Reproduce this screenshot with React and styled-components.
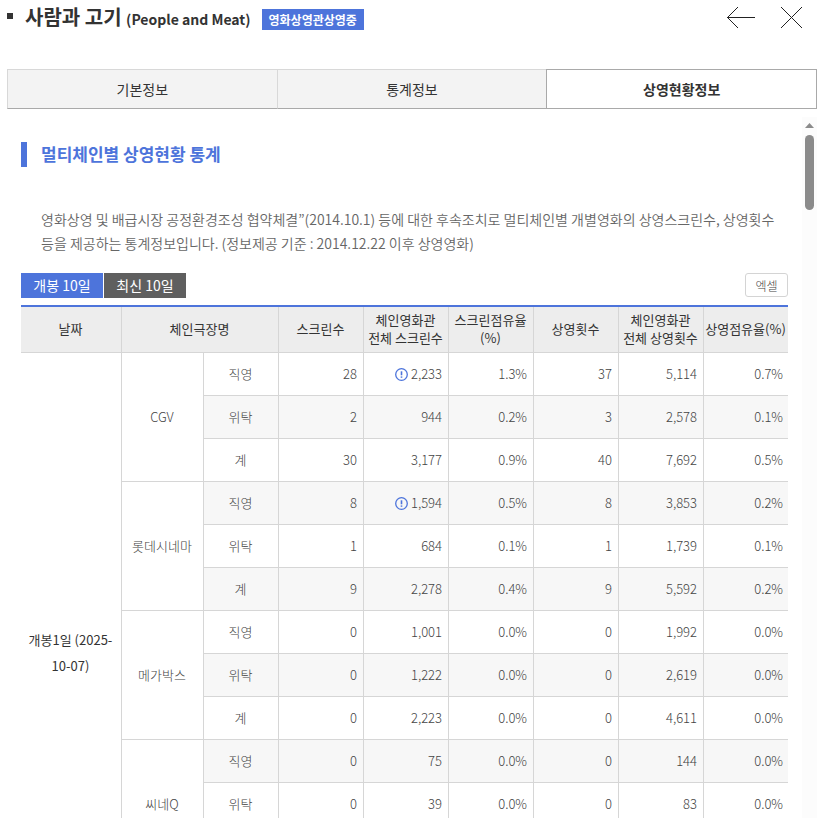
import React, { useState } from 'react';
import styled, { createGlobalStyle } from 'styled-components';

const GlobalStyle = createGlobalStyle`
  * {
    box-sizing: border-box;
  }
  body {
    margin: 0;
    background: #fff;
    color: #333;
    font-family: 'Noto Sans CJK KR', 'Noto Sans', sans-serif;
    font-size: 14px;
  }
  button {
    font-family: inherit;
    cursor: pointer;
  }
`;

const Layer = styled.div`
  display: flex;
  flex-direction: column;
  height: 100vh;
  padding: 0 8px 0 7px;
  overflow: hidden;
`;

const Header = styled.header`
  display: flex;
  justify-content: space-between;
  align-items: flex-start;
  height: 69px;
  flex-shrink: 0;
`;

const TitleGroup = styled.div`
  display: flex;
  align-items: center;
  height: 36px;
`;

const Bullet = styled.span`
  width: 6px;
  height: 6px;
  margin: 0 12px 4px 0;
  background: #333;
`;

const Title = styled.h1`
  margin: 0 11px 0 0;
  font-size: 20px;
  font-weight: 700;
  line-height: 36px;
`;

const EnglishTitle = styled.span`
  font-size: 14px;
`;

const Status = styled.span`
  height: 21px;
  margin-top: 2px;
  padding: 0 7px;
  background: #4d74db;
  color: #fff;
  font-size: 12px;
  font-weight: 700;
  line-height: 21px;
`;

const HeaderButtons = styled.div`
  display: flex;
  gap: 24px;
  padding: 6px 14px 0 0;
`;

const IconButton = styled.button`
  display: flex;
  padding: 0;
  border: 0;
  background: none;
  color: #222;
`;

const TabList = styled.div`
  display: flex;
  height: 40px;
  flex-shrink: 0;
`;

const Tab = styled.button`
  flex: 1;
  padding: 0 0 1px;
  border: 1px solid ${({ $active }) => ($active ? '#a9a9a9' : '#d8d8d8')};
  border-bottom-color: #a9a9a9;
  border-right-width: ${({ $active }) => ($active ? '1px' : '0')};
  background: ${({ $active }) => ($active ? '#fff' : '#f3f3f3')};
  color: #333;
  font-size: 14px;
  font-weight: ${({ $active }) => ($active ? 700 : 400)};
`;

const Pane = styled.div`
  display: flex;
  flex: 1;
  min-height: 0;
  margin-top: 8px;
`;

const Content = styled.main`
  flex: 1;
  min-width: 0;
  padding: 25px 14px 0;
  overflow: hidden;
`;

const SectionTitle = styled.h2`
  margin: 0 0 40px;
  padding: 0 0 2px 14px;
  border-left: 6px solid #4d74db;
  color: #4d74db;
  font-size: 17px;
  font-weight: 700;
  line-height: 23px;
`;

const Description = styled.p`
  margin: 0;
  padding: 0 0 18px 20px;
  color: #666;
  font-weight: 350;
  line-height: 24px;
  word-break: keep-all;
`;

const Toolbar = styled.div`
  display: flex;
  justify-content: space-between;
  align-items: flex-start;
  height: 32px;
`;

const RangeGroup = styled.div`
  display: flex;
  gap: 1px;
`;

const RangeButton = styled.button`
  min-width: 82px;
  height: 25px;
  padding: 0 12px;
  border: 0;
  background: ${({ $active }) => ($active ? '#4d74db' : '#5f5f5f')};
  color: #fff;
  font-size: 14px;
  line-height: 25px;
`;

const ExcelButton = styled.button`
  width: 43px;
  height: 24px;
  padding: 0;
  border: 1px solid #d4d4d4;
  border-radius: 3px;
  background: #fff;
  color: #444;
  font-size: 12px;
  font-weight: 300;
`;

const Table = styled.table`
  width: 100%;
  table-layout: fixed;
  border-collapse: separate;
  border-spacing: 0;
  border-top: 2px solid #4d74db;
`;

const Col = styled.col`
  width: ${({ $width }) => $width}px;
`;

const HeadCell = styled.th`
  height: 46px;
  padding: 0 1px 2px 0;
  border-right: 1px solid #d6d6d6;
  border-bottom: 1px solid #d6d6d6;
  background: #ededed;
  font-size: 13px;
  font-weight: 400;
  line-height: 18px;
  white-space: pre-line;
  &:last-child {
    border-right: 0;
    white-space: nowrap;
  }
`;

const Row = styled.tr`
  background: ${({ $striped }) => ($striped ? '#f7f7f7' : '#fff')};
`;

const Cell = styled.td`
  height: 43px;
  padding: 0 6px 0 5px;
  border-right: 1px solid #d6d6d6;
  border-bottom: 1px solid #d6d6d6;
  color: #444;
  font-size: 13px;
  font-weight: 300;
  line-height: 26px;
  text-align: right;
  &:last-child {
    padding-right: 5px;
    border-right: 0;
  }
`;

const NameCell = styled(Cell)`
  background: ${({ $plain }) => ($plain ? '#fff' : 'inherit')};
  text-align: center;
`;

const DateCell = styled(NameCell)`
  padding-bottom: 2px;
  color: #333;
  font-weight: 400;
`;

const Notice = styled.svg`
  margin-right: 3px;
  vertical-align: -2px;
`;

const ScrollTrack = styled.div`
  display: flex;
  flex-direction: column;
  align-items: center;
  gap: 7px;
  width: 15px;
  padding-top: 6px;
  background: #fcfcfc;
`;

const ScrollThumb = styled.div`
  width: 9px;
  height: 75px;
  border-radius: 5px;
  background: #8b8b8b;
`;

const tabs = ['기본정보', '통계정보', '상영현황정보'];
const ranges = ['개봉 10일', '최신 10일'];
const columnWidths = [101, 82, 75, 85, 85, 85, 85, 85, 84];

const chains = [
  {
    name: 'CGV',
    rows: [
      { type: '직영', values: ['28', '2,233', '1.3%', '37', '5,114', '0.7%'], notice: true },
      { type: '위탁', values: ['2', '944', '0.2%', '3', '2,578', '0.1%'] },
      { type: '계', values: ['30', '3,177', '0.9%', '40', '7,692', '0.5%'] },
    ],
  },
  {
    name: '롯데시네마',
    rows: [
      { type: '직영', values: ['8', '1,594', '0.5%', '8', '3,853', '0.2%'], notice: true },
      { type: '위탁', values: ['1', '684', '0.1%', '1', '1,739', '0.1%'] },
      { type: '계', values: ['9', '2,278', '0.4%', '9', '5,592', '0.2%'] },
    ],
  },
  {
    name: '메가박스',
    rows: [
      { type: '직영', values: ['0', '1,001', '0.0%', '0', '1,992', '0.0%'] },
      { type: '위탁', values: ['0', '1,222', '0.0%', '0', '2,619', '0.0%'] },
      { type: '계', values: ['0', '2,223', '0.0%', '0', '4,611', '0.0%'] },
    ],
  },
  {
    name: '씨네Q',
    rows: [
      { type: '직영', values: ['0', '75', '0.0%', '0', '144', '0.0%'] },
      { type: '위탁', values: ['0', '39', '0.0%', '0', '83', '0.0%'] },
      { type: '계', values: ['0', '114', '0.0%', '0', '227', '0.0%'] },
    ],
  },
  { name: '기타', rows: [{ values: ['-', '-', '-', '-', '-', '-'] }] },
  { name: '합계', rows: [{ values: ['39', '7,792', '0.5%', '49', '18,122', '0.3%'] }] },
];

// one flat list, so that the stripes run on across the chains
const tableRows = chains.flatMap((chain) =>
  chain.rows.map((row, i) => ({
    ...row,
    chain: i === 0 ? chain.name : null,
    span: chain.rows.length,
  }))
);

function NoticeIcon() {
  return (
    <Notice width="13" height="13" viewBox="0 0 13 13" fill="none" stroke="#4d74db" role="img" aria-label="안내">
      <circle cx="6.5" cy="6.5" r="5.8" strokeWidth="1.3" />
      <path d="M6.5 3.3v4" strokeWidth="1.6" />
      <path d="M6.5 8.4v1.4" strokeWidth="1.6" />
    </Notice>
  );
}

function StatsTable() {
  return (
    <Table>
      <colgroup>
        {columnWidths.map((width, i) => (
          <Col key={i} $width={width} />
        ))}
      </colgroup>
      <thead>
        <tr>
          <HeadCell scope="col">날짜</HeadCell>
          <HeadCell scope="col" colSpan={2}>체인극장명</HeadCell>
          <HeadCell scope="col">스크린수</HeadCell>
          <HeadCell scope="col">{'체인영화관\n전체 스크린수'}</HeadCell>
          <HeadCell scope="col">{'스크린점유율\n(%)'}</HeadCell>
          <HeadCell scope="col">상영횟수</HeadCell>
          <HeadCell scope="col">{'체인영화관\n전체 상영횟수'}</HeadCell>
          <HeadCell scope="col">상영점유율(%)</HeadCell>
        </tr>
      </thead>
      <tbody>
        {tableRows.map((row, i) => (
          <Row key={i} $striped={i % 2 === 1}>
            {i === 0 && (
              <DateCell $plain rowSpan={tableRows.length}>개봉1일 (2025-10-07)</DateCell>
            )}
            {row.chain && (
              <NameCell $plain rowSpan={row.span} colSpan={row.type ? 1 : 2}>{row.chain}</NameCell>
            )}
            {row.type && <NameCell>{row.type}</NameCell>}
            {row.values.map((value, j) => (
              <Cell key={j}>
                {row.notice && j === 1 && <NoticeIcon />}
                {value}
              </Cell>
            ))}
          </Row>
        ))}
      </tbody>
    </Table>
  );
}

export default function App() {
  const [tab, setTab] = useState(2);
  const [range, setRange] = useState(0);

  return (
    <Layer>
      <GlobalStyle />
      <Header>
        <TitleGroup>
          <Bullet />
          <Title>
            사람과 고기 <EnglishTitle>(People and Meat)</EnglishTitle>
          </Title>
          <Status>영화상영관상영중</Status>
        </TitleGroup>
        <HeaderButtons>
          <IconButton type="button" aria-label="이전">
            <svg width="30" height="23" viewBox="0 0 30 23" fill="none" stroke="currentColor">
              <path d="M1 11.5H29M12 1L1.5 11.5L12 22" />
            </svg>
          </IconButton>
          <IconButton type="button" aria-label="닫기">
            <svg width="23" height="23" viewBox="0 0 23 23" fill="none" stroke="currentColor">
              <path d="M1 1L22 22M22 1L1 22" />
            </svg>
          </IconButton>
        </HeaderButtons>
      </Header>
      <TabList role="tablist">
        {tabs.map((name, i) => (
          <Tab key={name} type="button" role="tab" aria-selected={i === tab} $active={i === tab} onClick={() => setTab(i)}>
            {name}
          </Tab>
        ))}
      </TabList>
      <Pane>
        <Content>
          <SectionTitle>멀티체인별 상영현황 통계</SectionTitle>
          <Description>
            영화상영 및 배급시장 공정환경조성 협약체결”(2014.10.1) 등에 대한 후속조치로 멀티체인별 개별영화의 상영스크린수, 상영횟수 등을 제공하는 통계정보입니다. (정보제공 기준 : 2014.12.22 이후 상영영화)
          </Description>
          <Toolbar>
            <RangeGroup>
              {ranges.map((name, i) => (
                <RangeButton key={name} type="button" $active={i === range} onClick={() => setRange(i)}>
                  {name}
                </RangeButton>
              ))}
            </RangeGroup>
            <ExcelButton type="button">엑셀</ExcelButton>
          </Toolbar>
          <StatsTable />
        </Content>
        <ScrollTrack aria-hidden="true">
          <svg width="9" height="5" viewBox="0 0 9 5" fill="#8b8b8b">
            <path d="M4.5 0L9 5H0z" />
          </svg>
          <ScrollThumb />
        </ScrollTrack>
      </Pane>
    </Layer>
  );
}
